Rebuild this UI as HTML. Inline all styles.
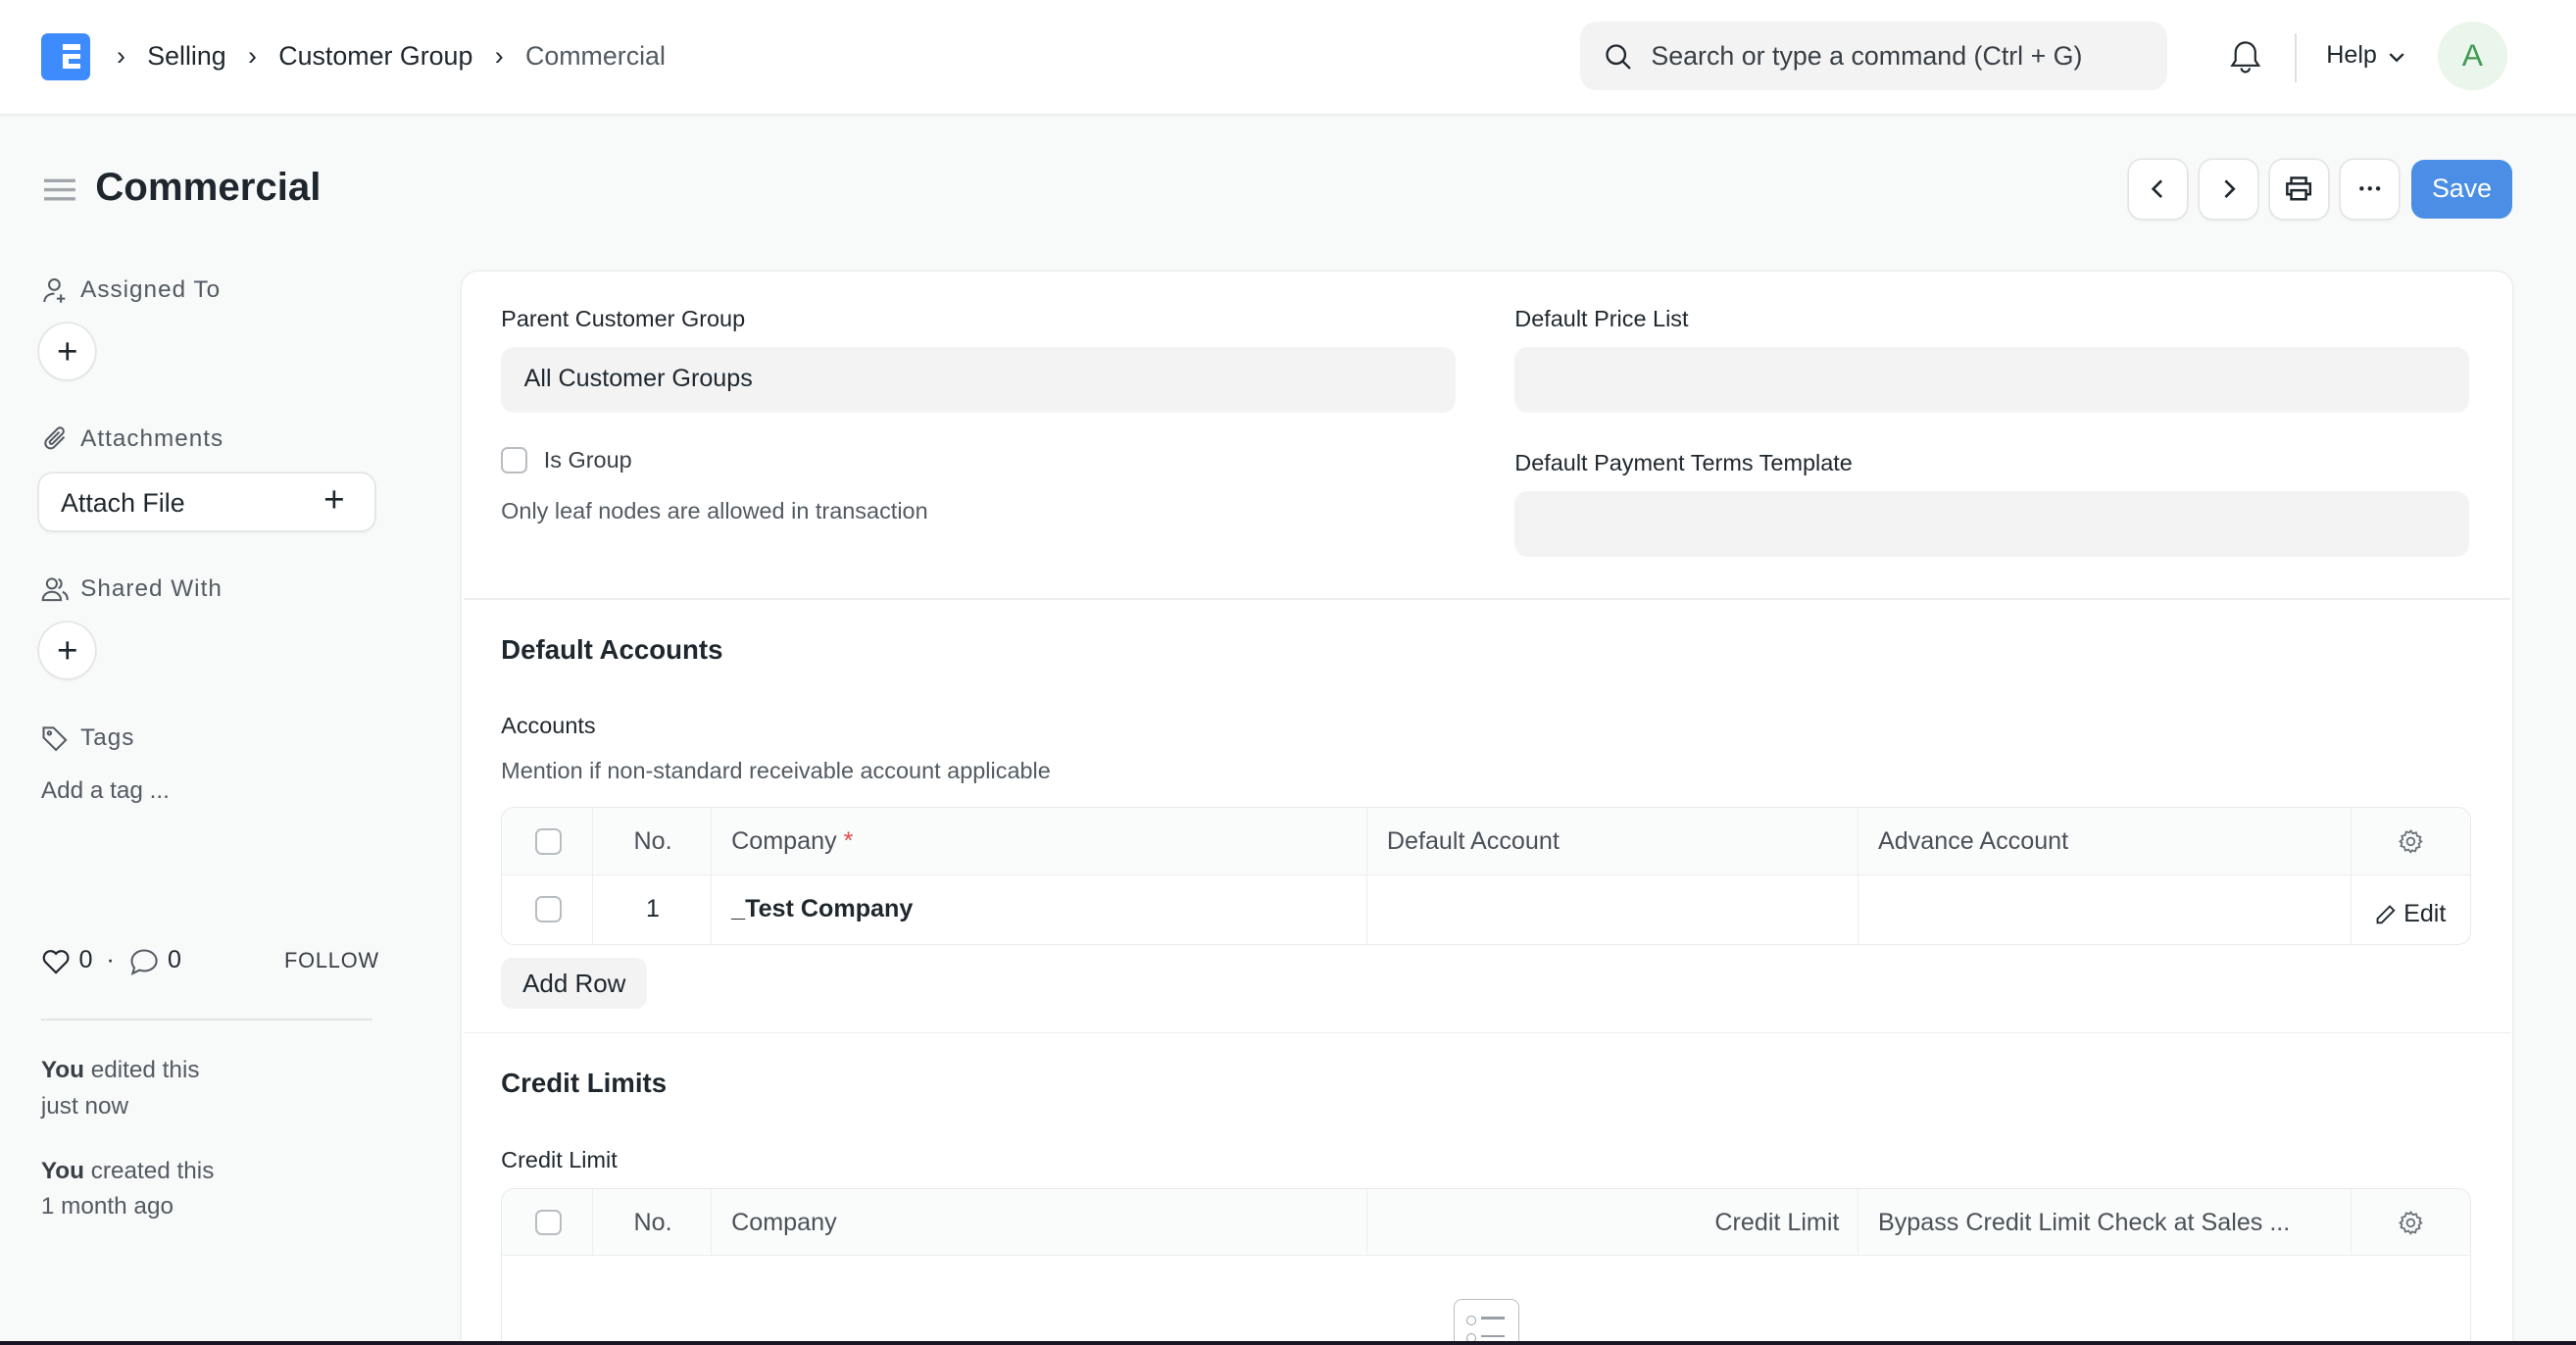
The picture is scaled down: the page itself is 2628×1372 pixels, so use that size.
<!DOCTYPE html>
<html><head><meta charset="utf-8">
<style>
*{box-sizing:border-box;margin:0;padding:0}
html,body{width:2628px;height:1372px;overflow:hidden;background:#f8f9f9}
#r{zoom:1.676;width:1568px;height:819px;position:relative;font-family:"Liberation Sans",sans-serif;color:#1f272e;font-size:14px}
.a{position:absolute;white-space:nowrap}
.nav{left:0;top:0;width:1568px;height:70px;background:#fff;border-bottom:1px solid #e6e8ea;box-shadow:0 1px 3px rgba(0,0,0,.05)}
.btn{position:absolute;top:97px;width:35px;height:36px;background:#fff;border-radius:8px;box-shadow:0 0 0 1px #e2e4e6,0 1px 2px rgba(0,0,0,.08);display:flex;align-items:center;justify-content:center}
.lbl{font-size:14.5px;color:#525a62;letter-spacing:.6px}
.circ{position:absolute;width:34px;height:34px;border-radius:50%;background:#fff;box-shadow:0 0 0 1px #e2e4e6,0 1px 2px rgba(0,0,0,.08);display:flex;align-items:center;justify-content:center;font-size:22px;font-weight:300}
.inp{position:absolute;height:40px;background:#f3f3f4;border-radius:8px;font-size:15px;padding:11px 14px}
.fl{font-size:14px;color:#1f272e}
.t{position:absolute;border:1px solid #e8e9eb;border-radius:8px;background:#fff}
.c{position:absolute;top:0;height:100%;border-left:1px solid #ebedef;font-size:15px;color:#4a5158;display:flex;align-items:center;padding:0 12px}
.cb{width:16px;height:16px;border:1.3px solid #b8bdc2;border-radius:4px;background:#fff}
</style></head><body><div id="r">
<div class="a nav"></div>
<div class="a" style="left:25px;top:20px;width:30px;height:29px;background:#3d8bfd;border-radius:4px"></div>
<div class="a" style="left:38px;top:27px;width:11px;height:3.5px;background:#fff"></div>
<div class="a" style="left:38px;top:33px;width:11px;height:3px;background:#fff"></div>
<div class="a" style="left:38px;top:38.5px;width:11px;height:3.5px;background:#fff"></div>
<div class="a" style="left:38px;top:33px;width:4px;height:9px;background:#fff"></div>
<div class="a" style="left:71px;top:25px;font-size:16px;color:#1f272e">›&nbsp;&nbsp;&nbsp;Selling&nbsp;&nbsp;&nbsp;›&nbsp;&nbsp;&nbsp;Customer Group&nbsp;&nbsp;&nbsp;<span style="color:#1f272e">›</span>&nbsp;&nbsp;&nbsp;<span style="color:#525a62">Commercial</span></div>
<div class="a" style="left:962px;top:13px;width:357px;height:42px;background:#f3f3f4;border-radius:10px"></div>
<svg class="a" style="left:977px;top:26px" width="17" height="17" viewBox="0 0 17 17" fill="none" stroke="#1f272e" stroke-width="1.4"><circle cx="7" cy="7" r="5.5"/><path d="M11 11l4.5 4.5"/></svg>
<div class="a" style="left:1005px;top:25px;font-size:16px;color:#383f45">Search or type a command (Ctrl + G)</div>
<svg class="a" style="left:1357px;top:24px" width="20" height="22" viewBox="0 0 20 22" fill="none" stroke="#1f272e" stroke-width="1.3"><path d="M10 2a6 6 0 0 0-6 6v5l-2 3h16l-2-3V8a6 6 0 0 0-6-6z"/><path d="M7.5 17.5a2.5 2.5 0 0 0 5 0"/></svg>
<div class="a" style="left:1397px;top:20px;width:1px;height:30px;background:#dde0e3"></div>
<div class="a" style="left:1416px;top:25px;font-size:15px">Help</div>
<svg class="a" style="left:1453px;top:30px" width="12" height="10" viewBox="0 0 12 10" fill="none" stroke="#1f272e" stroke-width="1.4"><path d="M2 3l4 4 4-4"/></svg>
<div class="a" style="left:1484px;top:13px;width:42px;height:42px;border-radius:50%;background:#eaf5ec;color:#3f9a53;font-size:19px;display:flex;align-items:center;justify-content:center">A</div>

<svg class="a" style="left:27px;top:108px" width="19" height="15" viewBox="0 0 19 15" stroke="#a0a6ac" stroke-width="2"><path d="M0 2h19M0 7.5h19M0 13h19"/></svg>
<div class="a" style="left:58px;top:100px;font-size:24px;font-weight:bold">Commercial</div>
<div class="btn" style="left:1296px"><svg width="14" height="14" viewBox="0 0 14 14" fill="none" stroke="#1f272e" stroke-width="1.6"><path d="M9 2L4 7l5 5"/></svg></div>
<div class="btn" style="left:1339px"><svg width="14" height="14" viewBox="0 0 14 14" fill="none" stroke="#1f272e" stroke-width="1.6"><path d="M5 2l5 5-5 5"/></svg></div>
<div class="btn" style="left:1382px"><svg width="18" height="16" viewBox="0 0 18 16" fill="none" stroke="#1f272e" stroke-width="1.5"><path d="M4.5 5V1.5h9V5M4.5 11.5H2V5h14v6.5h-2.5M4.5 9h9v5.5h-9z"/></svg></div>
<div class="btn" style="left:1425px"><svg width="14" height="4" viewBox="0 0 14 4" fill="#1f272e"><circle cx="2" cy="2" r="1.3"/><circle cx="7" cy="2" r="1.3"/><circle cx="12" cy="2" r="1.3"/></svg></div>
<div class="a" style="left:1468px;top:97px;width:61px;height:36px;background:#4a8ee6;border-radius:8px;color:#fff;font-size:16px;display:flex;align-items:center;justify-content:center">Save</div>

<svg class="a" style="left:25px;top:168px" width="17" height="17" viewBox="0 0 17 17" fill="none" stroke="#525a62" stroke-width="1.2"><circle cx="8" cy="5" r="3.2"/><path d="M2 15.5c0-3 2.5-5 6-5M12 11v5M9.5 13.5h5"/></svg>
<div class="a lbl" style="left:49px;top:168px">Assigned To</div>
<div class="circ" style="left:24px;top:197px">+</div>
<svg class="a" style="left:25px;top:259px" width="17" height="17" viewBox="0 0 17 17" fill="none" stroke="#525a62" stroke-width="1.2"><path d="M14 7l-6 6a3 3 0 0 1-4.5-4.5l6.5-6.5a2 2 0 0 1 3 3l-6 6a1 1 0 0 1-1.5-1.5l5.5-5.5"/></svg>
<div class="a lbl" style="left:49px;top:259px">Attachments</div>
<div class="a" style="left:24px;top:288px;width:204px;height:35px;background:#fff;border-radius:8px;box-shadow:0 0 0 1px #e2e4e6,0 1px 2px rgba(0,0,0,.08)"></div>
<div class="a" style="left:37px;top:297px;font-size:16px">Attach File</div>
<div class="a" style="left:197px;top:292px;font-size:22px;font-weight:300">+</div>
<svg class="a" style="left:25px;top:350px" width="17" height="17" viewBox="0 0 17 17" fill="none" stroke="#525a62" stroke-width="1.2"><circle cx="6.5" cy="5" r="3"/><path d="M1 15c0-3 2.5-5 5.5-5s5.5 2 5.5 5zM10.5 2.3a3 3 0 0 1 0 5.5M13 10c2 .8 3 2.6 3 5"/></svg>
<div class="a lbl" style="left:49px;top:350px">Shared With</div>
<div class="circ" style="left:24px;top:379px">+</div>
<svg class="a" style="left:25px;top:441px" width="17" height="17" viewBox="0 0 17 17" fill="none" stroke="#525a62" stroke-width="1.2"><path d="M1.5 2v6l7.5 7.5 6-6L7.5 2z"/><circle cx="5" cy="5.3" r="1"/></svg>
<div class="a lbl" style="left:49px;top:441px">Tags</div>
<div class="a" style="left:25px;top:473px;font-size:14.5px;color:#525a62">Add a tag ...</div>
<svg class="a" style="left:25px;top:577px" width="18" height="16" viewBox="0 0 18 16" fill="none" stroke="#1f272e" stroke-width="1.3"><path d="M9 15L2.5 8.5a3.8 3.8 0 0 1 6.5-5 3.8 3.8 0 0 1 6.5 5z"/></svg>
<div class="a" style="left:48px;top:576px;font-size:15px">0&nbsp;&nbsp;·</div>
<svg class="a" style="left:79px;top:577px" width="18" height="17" viewBox="0 0 18 17" fill="none" stroke="#525a62" stroke-width="1.2"><path d="M9 1.5c4.2 0 7.5 2.8 7.5 6.3S13.2 14 9 14c-1 0-2-.2-2.8-.5L2 15.5l1-3.5C2 10.8 1.5 9.4 1.5 7.8 1.5 4.3 4.8 1.5 9 1.5z"/></svg>
<div class="a" style="left:102px;top:576px;font-size:15px">0</div>
<div class="a" style="left:173px;top:577px;font-size:13px;color:#383f45;letter-spacing:.5px">FOLLOW</div>
<div class="a" style="left:25px;top:620px;width:202px;height:1px;background:#e2e4e6"></div>
<div class="a" style="left:25px;top:641px;font-size:14.5px;color:#525a62;line-height:22px"><b style="color:#383f45">You</b> edited this<br>just now</div>
<div class="a" style="left:25px;top:702px;font-size:14.5px;color:#525a62;line-height:22px"><b style="color:#383f45">You</b> created this<br>1 month ago</div>

<div class="a" style="left:281px;top:165px;width:1248px;height:660px;background:#fff;border-radius:10px;box-shadow:0 0 0 1px #eceef0,0 1px 3px rgba(0,0,0,.04)"></div>
<div class="a fl" style="left:305px;top:186px">Parent Customer Group</div>
<div class="inp" style="left:305px;top:211px;width:581px;color:#1f272e">All Customer Groups</div>
<div class="a cb" style="left:305px;top:272px"></div>
<div class="a fl" style="left:331px;top:272px;color:#383f45">Is Group</div>
<div class="a" style="left:305px;top:303px;font-size:14px;color:#525a62">Only leaf nodes are allowed in transaction</div>
<div class="a fl" style="left:922px;top:186px">Default Price List</div>
<div class="inp" style="left:922px;top:211px;width:581px"></div>
<div class="a fl" style="left:922px;top:274px">Default Payment Terms Template</div>
<div class="inp" style="left:922px;top:299px;width:581px"></div>
<div class="a" style="left:282px;top:364px;width:1246px;height:1px;background:#ebedef"></div>
<div class="a" style="left:305px;top:386px;font-size:16.5px;font-weight:bold">Default Accounts</div>
<div class="a fl" style="left:305px;top:434px">Accounts</div>
<div class="a" style="left:305px;top:461px;font-size:14px;color:#525a62">Mention if non-standard receivable account applicable</div>
<div class="t" style="left:305px;top:491px;width:1199px;height:84px">
 <div class="a" style="left:0;top:0;width:100%;height:41px;background:#fafbfb;border-bottom:1px solid #ebedef;border-radius:8px 8px 0 0"></div>
 <div class="a" style="left:0;top:0;width:100%;height:41px">
  <div class="c" style="left:0;width:56px;border:0;justify-content:center"><div class="cb"></div></div>
  <div class="c" style="left:55px;width:73px;justify-content:center">No.</div>
  <div class="c" style="left:127px;width:400px">Company&nbsp;<span style="color:#e24c4c">*</span></div>
  <div class="c" style="left:526px;width:300px">Default Account</div>
  <div class="c" style="left:825px;width:300px">Advance Account</div>
  <div class="c" style="left:1125px;width:73px;justify-content:center"><svg width="16" height="16" viewBox="0 0 16 16" fill="none" stroke="#6b737a" stroke-width="1.1"><circle cx="8" cy="8" r="2.3"/><path d="M8 1.5l1.3 1.6 2-.5.6 2 2 .6-.5 2L14.5 8l-1.6 1.3.5 2-2 .6-.6 2-2-.5L8 14.5l-1.3-1.6-2 .5-.6-2-2-.6.5-2L1.5 8l1.6-1.3-.5-2 2-.6.6-2 2 .5z"/></svg></div>
 </div>
 <div class="a" style="left:0;top:41px;width:100%;height:42px">
  <div class="c" style="left:0;width:56px;border:0;justify-content:center"><div class="cb"></div></div>
  <div class="c" style="left:55px;width:73px;justify-content:center;color:#1f272e">1</div>
  <div class="c" style="left:127px;width:400px;color:#1f272e;font-weight:bold">_Test Company</div>
  <div class="c" style="left:526px;width:300px"></div>
  <div class="c" style="left:825px;width:300px"></div>
  <div class="c" style="left:1125px;width:73px;justify-content:center;color:#1f272e;padding-top:6px"><svg width="13" height="13" viewBox="0 0 13 13" fill="none" stroke="#1f272e" stroke-width="1.1"><path d="M9 1.5l2.5 2.5L4 11.5H1.5V9z"/></svg>&nbsp;Edit</div>
 </div>
</div>
<div class="a" style="left:305px;top:583px;width:89px;height:31px;background:#f3f3f4;border-radius:7px;font-size:15.5px;display:flex;align-items:center;justify-content:center">Add Row</div>
<div class="a" style="left:282px;top:628px;width:1246px;height:1px;background:#ebedef"></div>
<div class="a" style="left:305px;top:650px;font-size:16.5px;font-weight:bold">Credit Limits</div>
<div class="a fl" style="left:305px;top:698px">Credit Limit</div>
<div class="t" style="left:305px;top:723px;width:1199px;height:110px">
 <div class="a" style="left:0;top:0;width:100%;height:41px;background:#fafbfb;border-bottom:1px solid #ebedef;border-radius:8px 8px 0 0"></div>
 <div class="a" style="left:0;top:0;width:100%;height:41px">
  <div class="c" style="left:0;width:56px;border:0;justify-content:center"><div class="cb"></div></div>
  <div class="c" style="left:55px;width:73px;justify-content:center">No.</div>
  <div class="c" style="left:127px;width:400px">Company</div>
  <div class="c" style="left:526px;width:300px;justify-content:flex-end">Credit Limit</div>
  <div class="c" style="left:825px;width:300px">Bypass Credit Limit Check at Sales ...</div>
  <div class="c" style="left:1125px;width:73px;justify-content:center"><svg width="16" height="16" viewBox="0 0 16 16" fill="none" stroke="#6b737a" stroke-width="1.1"><circle cx="8" cy="8" r="2.3"/><path d="M8 1.5l1.3 1.6 2-.5.6 2 2 .6-.5 2L14.5 8l-1.6 1.3.5 2-2 .6-.6 2-2-.5L8 14.5l-1.3-1.6-2 .5-.6-2-2-.6.5-2L1.5 8l1.6-1.3-.5-2 2-.6.6-2 2 .5z"/></svg></div>
 </div>
 <div class="a" style="left:579px;top:67px;width:40px;height:40px;border:1px solid #b8bdc2;border-radius:5px;background:#fff"></div>
 <div class="a" style="left:587px;top:77px;width:6px;height:6px;border:1px solid #9aa0a6;border-radius:50%"></div>
 <div class="a" style="left:596px;top:78px;width:14px;height:1.5px;background:#9aa0a6"></div>
 <div class="a" style="left:587px;top:88px;width:6px;height:6px;border:1px solid #9aa0a6;border-radius:50%"></div>
 <div class="a" style="left:596px;top:89px;width:14px;height:1.5px;background:#9aa0a6"></div>
</div>
<div class="a" style="left:0;top:816px;width:1568px;height:3px;background:#1a1522"></div>
</div></body></html>
